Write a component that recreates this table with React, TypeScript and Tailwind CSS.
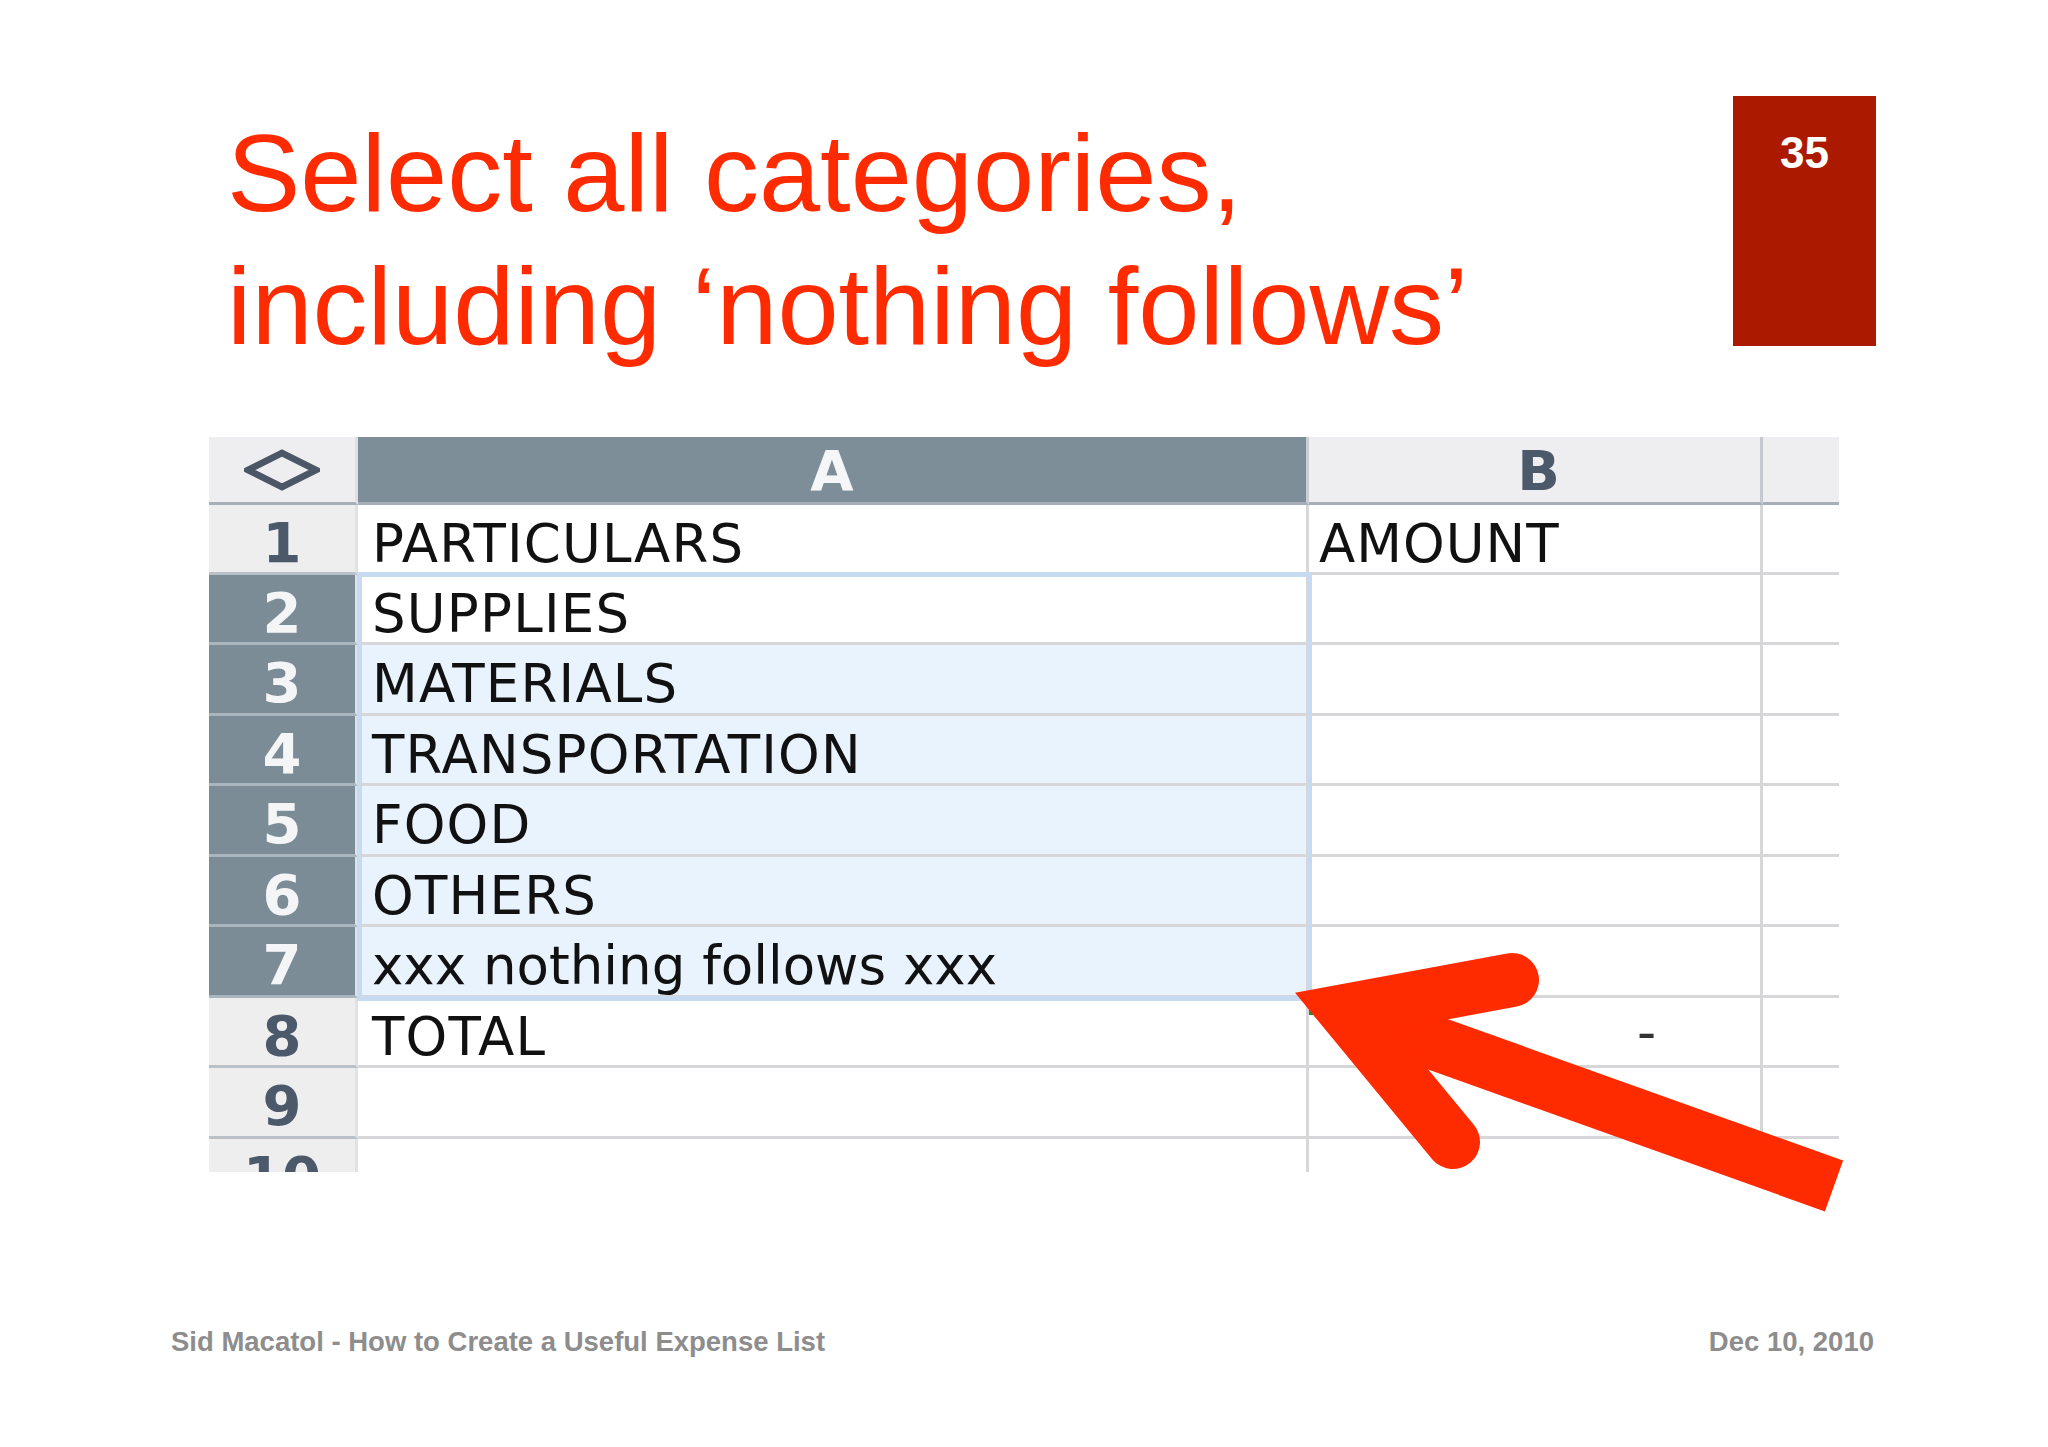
import React from "react";

type Row = {
  n: string;
  a?: string;
  b?: string;
  sel?: boolean;
  active?: boolean;
  green?: boolean;
};

const rows: Row[] = [
  { n: "1", a: "PARTICULARS", b: "AMOUNT" },
  { n: "2", a: "SUPPLIES", sel: true, active: true },
  { n: "3", a: "MATERIALS", sel: true },
  { n: "4", a: "TRANSPORTATION", sel: true },
  { n: "5", a: "FOOD", sel: true },
  { n: "6", a: "OTHERS", sel: true },
  { n: "7", a: "xxx nothing follows xxx", sel: true },
  { n: "8", a: "TOTAL", b: "-", green: true },
  { n: "9" },
];

function Diamond() {
  return (
    <svg width="76" height="42" viewBox="0 0 76 42">
      <polygon points="38,4 72,21 38,38 4,21" fill="none" stroke="#4b5767" strokeWidth="6.5" />
    </svg>
  );
}

function Sheet() {
  return (
    <div className="relative ml-[209px] w-[1630px] font-['DejaVu_Sans',Verdana,sans-serif]">
      <div className="grid grid-cols-[149px_951px_454px_76px] grid-rows-[68px_70px_70px_71px_70px_71px_70px_71px_70px_71px_33px] overflow-hidden">
        {/* header row */}
        <div className="flex items-center justify-center bg-[#eeeef0] border-b-[3px] border-r-[3px] border-b-[#a6afb8] border-r-[#dcdfe3]">
          <Diamond />
        </div>
        <div className="bg-[#7d8e99] border-b-[3px] border-r-[3px] border-b-[#a6afb8] border-r-[#c9ced3] pt-[4px] text-center text-[56px] font-bold leading-[59px] text-[#f4f6f7]">
          A
        </div>
        <div className="bg-[#eeeef0] border-b-[3px] border-r-[3px] border-b-[#a6afb8] border-r-[#c4c9cf] pt-[4px] pl-[8px] text-center text-[56px] font-bold leading-[59px] text-[#4b596a]">
          B
        </div>
        <div className="bg-[#eeeef0] border-b-[3px] border-b-[#a6afb8]" />

        {rows.map((r) => {
          const caps = r.a !== undefined && r.a === r.a.toUpperCase();
          return (
            <React.Fragment key={r.n}>
              <div
                className={
                  r.sel
                    ? "bg-[#7b8c97] border-b-[3px] border-r-[3px] border-b-[#aab6be] border-r-[#dfe3e6] pt-[8px] text-center text-[56px] font-bold leading-[59px] text-[#f3f5f6]"
                    : "bg-[#eeeeef] border-b-[3px] border-r-[3px] border-b-[#b9c0c7] border-r-[#dfe3e6] pt-[8px] text-center text-[56px] font-bold leading-[59px] text-[#4b596a]"
                }
              >
                {r.n}
              </div>
              <div
                className={
                  (r.sel && !r.active ? "bg-[#e9f3fe] " : "bg-white ") +
                  (caps ? "tracking-[1.2px] " : "") +
                  "border-b-[3px] border-r-[3px] border-[#d7d7da] pl-[14px] pt-[9px] text-[53px] leading-[59px] text-[#111] whitespace-nowrap"
                }
              >
                {r.a}
              </div>
              <div
                className={
                  "relative bg-white border-b-[3px] border-r-[3px] border-[#d7d7da] text-[53px] leading-[59px] text-[#111] whitespace-nowrap " +
                  (r.b === "-" ? "text-right pr-[104px] pt-[5px] text-[#333]" : "pl-[10px] pt-[9px] tracking-[1px]")
                }
              >
                {r.green && <span className="absolute left-0 top-[8px] w-[4px] h-[9px] bg-[#1f8f2a]" />}
                {r.b}
              </div>
              <div className="bg-white border-b-[3px] border-[#d7d7da]" />
            </React.Fragment>
          );
        })}

        {/* row 10, cut off at the bottom of the picture */}
        <div className="bg-[#eeeeef] border-r-[3px] border-r-[#dfe3e6] pt-[8px] text-center text-[56px] font-bold leading-[59px] text-[#4b596a] overflow-hidden">
          10
        </div>
        <div className="bg-white border-r-[3px] border-[#d7d7da]" />
        <div className="bg-white border-r-[3px] border-[#d7d7da]" />
        <div className="bg-white" />
      </div>

      {/* selection A2:A7 */}
      <div className="pointer-events-none absolute left-[148px] top-[135px] w-[955px] h-[429px] border-[5px] border-[#c6dbf2]" />
    </div>
  );
}

function Arrow() {
  return (
    <svg
      className="pointer-events-none absolute inset-0"
      width="2048"
      height="1447"
      viewBox="0 0 2048 1447"
    >
      <line x1="1345" y1="1011" x2="1834" y2="1186" stroke="#fe2a00" strokeWidth="54" strokeLinecap="butt" />
      <polyline
        points="1512,980 1345,1011 1453,1142"
        fill="none"
        stroke="#fe2a00"
        strokeWidth="54"
        strokeLinecap="round"
        strokeLinejoin="miter"
        strokeMiterlimit="6"
      />
    </svg>
  );
}

export default function App() {
  return (
    <div className="relative w-[2048px] h-[1447px] overflow-hidden bg-white font-['Liberation_Sans',Arial,sans-serif]">
      <div className="flex h-[437px] pt-[96px] pl-[227px] pr-[172px]">
        <h1 className="mt-[10px] whitespace-nowrap text-[110px] leading-[133px] text-[#fe2b00]">
          Select all categories,
          <br />
          including ‘nothing follows’
        </h1>
        <div className="ml-auto flex h-[250px] w-[143px] justify-center bg-[#ab1900] pt-[35px]">
          <span className="text-[44px] font-bold leading-[44px] text-white">35</span>
        </div>
      </div>

      <Sheet />

      <div className="mt-[156px] flex justify-between pl-[171px] pr-[174px] text-[27.5px] font-bold leading-[27.5px] text-[#8d8d8d]">
        <span>Sid Macatol - How to Create a Useful Expense List</span>
        <span>Dec 10, 2010</span>
      </div>

      <Arrow />
    </div>
  );
}
